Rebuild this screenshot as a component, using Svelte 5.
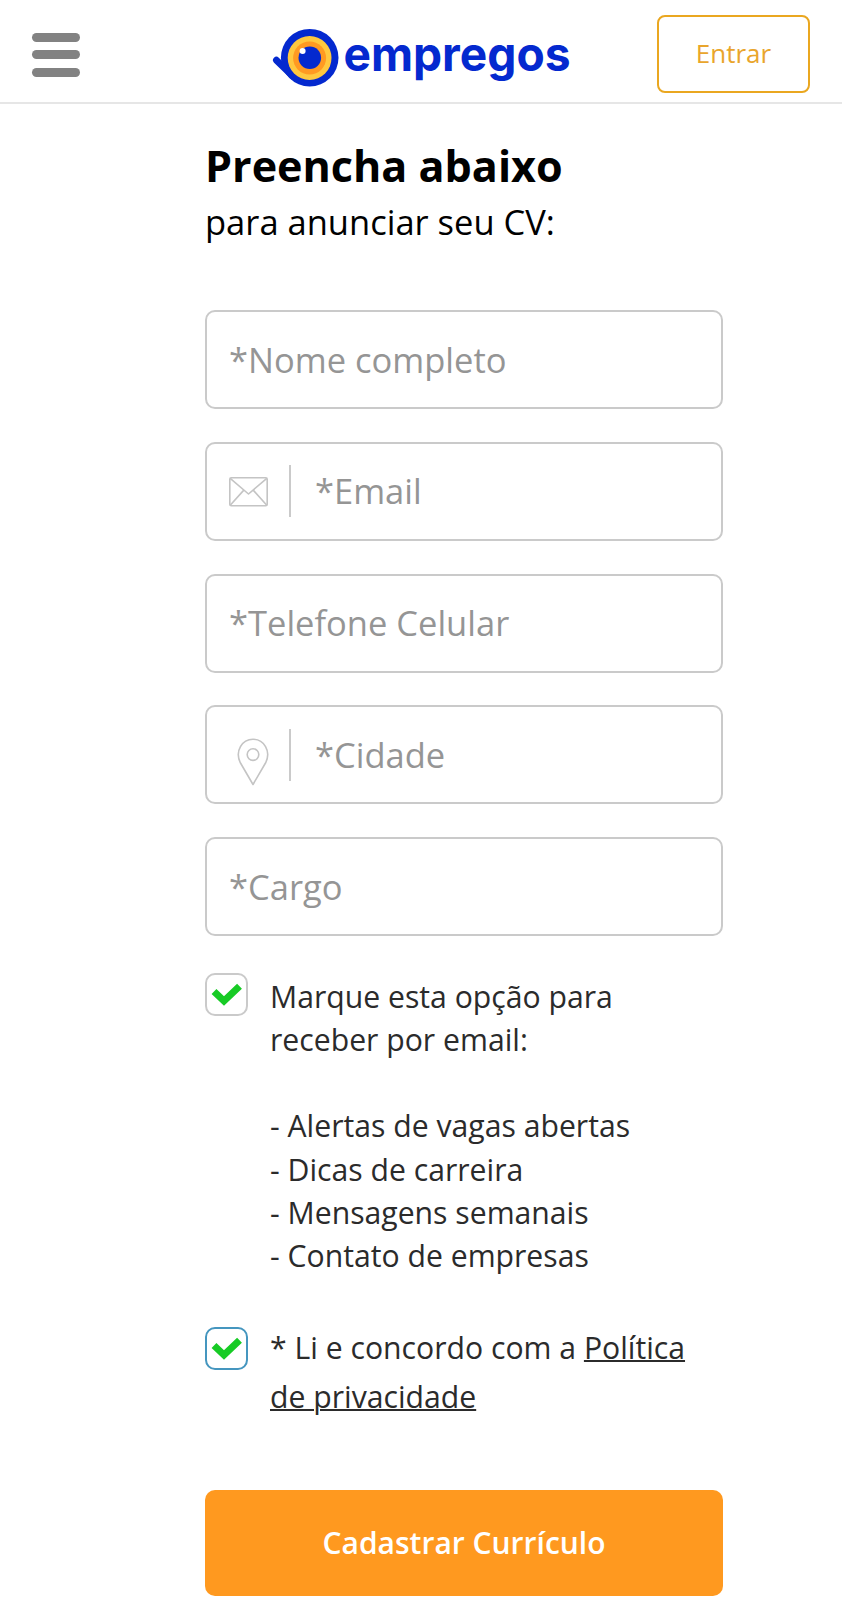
<script lang="ts">
  type Field = { name: string; label: string; type: string; icon?: 'mail' | 'pin' };

  const fields: Field[] = [
    { name: 'nome', label: '*Nome completo', type: 'text' },
    { name: 'email', label: '*Email', type: 'email', icon: 'mail' },
    { name: 'telefone', label: '*Telefone Celular', type: 'tel' },
    { name: 'cidade', label: '*Cidade', type: 'text', icon: 'pin' },
    { name: 'cargo', label: '*Cargo', type: 'text' },
  ];

  const perks = ['Alertas de vagas abertas', 'Dicas de carreira', 'Mensagens semanais', 'Contato de empresas'];

  let values: Record<string, string> = $state({ nome: '', email: '', telefone: '', cidade: '', cargo: '' });
  let alerts = $state(true);
  let terms = $state(true);
</script>

{#snippet check(on: boolean)}
  <svg class="tick" viewBox="0 0 32 24" aria-hidden="true">
    {#if on}
      <path d="M3,9.5 L13,19 L28.5,4.2" fill="none" stroke="#17cb25" stroke-width="7" />
    {/if}
  </svg>
{/snippet}

<header>
  <button class="menu" aria-label="Menu">
    <span></span>
    <span></span>
    <span></span>
  </button>

  <svg class="logo" viewBox="0 0 300 66" role="img" aria-label="empregos">
    <path d="M4.4,32.2 L21,48.4" stroke="#0429cf" stroke-width="6.8" stroke-linecap="round" />
    <circle cx="37.7" cy="29.7" r="28.8" fill="#0429cf" />
    <circle cx="37.6" cy="30" r="21.9" fill="#ffc83f" />
    <circle cx="37.6" cy="30" r="16.5" fill="#ff9a22" />
    <circle cx="37.8" cy="29.8" r="11.3" fill="#0429cf" />
    <circle cx="30.6" cy="23" r="3" fill="#fff" />
    <text x="71.5" y="43" textLength="227" lengthAdjust="spacingAndGlyphs">empregos</text>
  </svg>

  <button class="login">Entrar</button>
</header>

<main>
  <h1>Preencha abaixo</h1>
  <p class="subtitle">para anunciar seu CV:</p>

  <form onsubmit={(e) => e.preventDefault()}>
    {#each fields as field (field.name)}
      <label class="field">
        {#if field.icon}
          <span class="icon">
            {#if field.icon === 'mail'}
              <svg class="mail" viewBox="0 0 39 30" aria-hidden="true">
                <rect x="0.8" y="0.8" width="37.4" height="28" rx="1.5" />
                <path d="M1.2,1.4 L19.5,17 L37.8,1.4 M1.2,28.2 L14.6,13.4 M37.8,28.2 L24.4,13.4" />
              </svg>
            {:else}
              <svg class="pin" viewBox="0 0 32 48" aria-hidden="true">
                <path d="M16,46.5 L3.2,24.5 C-2.2,13 5,1.2 16,1.2 S34.2,13 28.8,24.5 Z" />
                <circle cx="16" cy="16.6" r="5.8" />
              </svg>
            {/if}
          </span>
        {/if}
        <input type={field.type} name={field.name} placeholder={field.label} bind:value={values[field.name]} />
      </label>
    {/each}

    <label class="option">
      <input type="checkbox" bind:checked={alerts} />
      <span class="box">{@render check(alerts)}</span>
      <span class="text">
        Marque esta opção para<br />receber por email:<br /><br />
        {#each perks as perk}
          - {perk}<br />
        {/each}
      </span>
    </label>

    <label class="option terms">
      <input type="checkbox" bind:checked={terms} />
      <span class="box">{@render check(terms)}</span>
      <span class="text">* Li e concordo com a <a href="#privacidade">Política</a><br /><a href="#privacidade">de privacidade</a></span>
    </label>

    <button class="submit">Cadastrar Currículo</button>
  </form>
</main>

<style>
  :global(body) {
    background: #fff;
    font-family: 'Open Sans', 'Noto Sans', sans-serif;
    color: #2b2b2b;
    overflow-x: hidden;
  }
  header {
    display: flex;
    align-items: flex-start;
    justify-content: space-between;
    box-sizing: border-box;
    height: 104px;
    padding: 15px 32px 0;
    border-bottom: 2px solid #e6e6e6;
  }
  button {
    font: inherit;
    padding: 0;
    border: none;
    background: none;
    cursor: pointer;
  }
  .menu {
    display: flex;
    flex-direction: column;
    gap: 8.6px;
    width: 48px;
    margin-top: 18px;
    margin-right: 104px;
  }
  .menu span {
    height: 8.8px;
    border-radius: 5px;
    background: #828282;
  }
  .logo {
    width: 300px;
    height: 66px;
    margin-top: 13px;
    margin-right: -3px;
    overflow: visible;
  }
  .logo text {
    font-family: Inter, sans-serif;
    font-size: 48px;
    font-weight: 700;
    fill: #0429cf;
  }
  .login {
    box-sizing: border-box;
    width: 153px;
    height: 78px;
    padding-bottom: 2px;
    border: 2px solid #eaa720;
    border-radius: 8px;
    color: #e9a52c;
    font-size: 26px;
  }
  main {
    width: 518px;
    padding: 32px 0 0 205px;
  }
  h1 {
    margin: 0;
    font-size: 43.1px;
    line-height: 60px;
    font-weight: 700;
    color: #000;
    white-space: nowrap;
  }
  .subtitle {
    margin: 0 0 63px;
    font-size: 34.5px;
    line-height: 51px;
    color: #000;
  }
  form {
    display: flex;
    flex-direction: column;
  }
  .field {
    display: flex;
    align-items: center;
    box-sizing: border-box;
    height: 99px;
    margin-bottom: 32.8px;
    padding: 0 22px;
    border: 2px solid #cacaca;
    border-radius: 10px;
  }
  .icon {
    display: flex;
    align-items: center;
    box-sizing: border-box;
    width: 62px;
    height: 52px;
    margin-right: 24px;
    border-right: 2px solid #cacaca;
  }
  .icon svg {
    flex: none;
    fill: none;
    stroke: #c4c4c4;
    stroke-width: 1.6;
    stroke-linejoin: round;
  }
  .mail {
    width: 39px;
    height: 30px;
    margin-top: 2px;
  }
  .pin {
    width: 32px;
    height: 48px;
    margin: 14px 0 0 8px;
  }
  .field input {
    flex: 1;
    min-width: 0;
    padding: 0 0 1px;
    border: none;
    outline: none;
    background: none;
    font: inherit;
    font-size: 34.5px;
    color: #2b2b2b;
  }
  .field input::placeholder {
    color: #959595;
    opacity: 1;
  }
  .option {
    display: flex;
    align-items: flex-start;
    gap: 22px;
    margin-top: 4px;
  }
  .option input {
    position: absolute;
    opacity: 0;
  }
  .box {
    display: flex;
    flex: none;
    align-items: center;
    justify-content: center;
    box-sizing: border-box;
    width: 43px;
    height: 43px;
    border: 2px solid #cacaca;
    border-radius: 10px;
  }
  .tick {
    width: 32px;
    height: 24px;
  }
  .text {
    flex: 1;
    margin-top: 1.7px;
    font-size: 30.18px;
    line-height: 43.25px;
    white-space: nowrap;
  }
  .terms {
    margin-top: 49.3px;
  }
  .terms .box {
    border-color: #4596bf;
  }
  .terms .text {
    line-height: 49.7px;
    margin-top: -4px;
  }
  .terms a {
    color: inherit;
    text-decoration: underline;
    text-decoration-thickness: 2px;
  }
  .submit {
    height: 105.5px;
    margin-top: 68.3px;
    padding-bottom: 2px;
    border-radius: 10px;
    background: #ff991f;
    color: #fff;
    font-size: 30px;
    font-weight: 600;
  }
</style>
